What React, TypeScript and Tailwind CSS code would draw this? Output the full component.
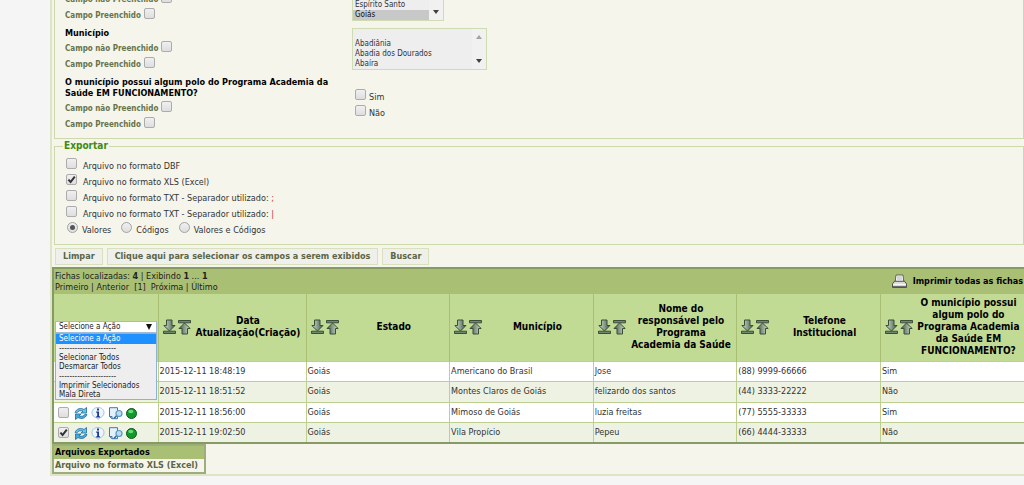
import type { InputHTMLAttributes, ReactNode } from 'react'
import { clsx } from 'clsx'

type Ficha = {
  data: string
  estado: string
  municipio: string
  responsavel: string
  telefone: string
  polo: string
  checked?: boolean
}

const fichas: Ficha[] = [
  {
    data: '2015-12-11 18:48:19',
    estado: 'Goiás',
    municipio: 'Americano do Brasil',
    responsavel: 'Jose',
    telefone: '(88) 9999-66666',
    polo: 'Sim',
  },
  {
    data: '2015-12-11 18:51:52',
    estado: 'Goiás',
    municipio: 'Montes Claros de Goiás',
    responsavel: 'felizardo dos santos',
    telefone: '(44) 3333-22222',
    polo: 'Não',
  },
  {
    data: '2015-12-11 18:56:00',
    estado: 'Goiás',
    municipio: 'Mimoso de Goiás',
    responsavel: 'luzia freitas',
    telefone: '(77) 5555-33333',
    polo: 'Sim',
  },
  {
    data: '2015-12-11 19:02:50',
    estado: 'Goiás',
    municipio: 'Vila Propício',
    responsavel: 'Pepeu',
    telefone: '(66) 4444-33333',
    polo: 'Não',
    checked: true,
  },
]

const columns = [
  'Data Atualização(Criação)',
  'Estado',
  'Município',
  'Nome do responsável pelo Programa Academia\u00a0da\u00a0Saúde',
  'Telefone Institucional',
  'O município possui algum polo do Programa Academia da Saúde EM FUNCIONAMENTO?',
]

const acoes = [
  'Selecione a Ação',
  '----------------------',
  'Selecionar Todos',
  'Desmarcar Todos',
  '----------------------',
  'Imprimir Selecionados',
  'Mala Direta',
]

function Checkbox(props: InputHTMLAttributes<HTMLInputElement>) {
  return (
    <span className="grid size-[11px] shrink-0">
      <input
        type="checkbox"
        className="peer col-start-1 row-start-1 size-[11px] appearance-none rounded-[2px] border border-[#acacac] bg-linear-to-b from-[#f0f0f0] to-[#dedede]"
        {...props}
      />
      <svg
        viewBox="0 0 11 11"
        className="pointer-events-none invisible col-start-1 row-start-1 size-[11px] peer-checked:visible"
      >
        <path d="M2.4 5.6 4.6 8 8.8 2.6" fill="none" stroke="#333" strokeWidth="2" />
      </svg>
    </span>
  )
}

function Radio(props: InputHTMLAttributes<HTMLInputElement>) {
  return (
    <span className="grid size-[11px] shrink-0 place-items-center">
      <input
        type="radio"
        name="conteudo"
        className="peer col-start-1 row-start-1 size-[11px] appearance-none rounded-full border border-[#a2a2a2] bg-linear-to-b from-[#f0f0f0] to-[#dedede]"
        {...props}
      />
      <span className="pointer-events-none invisible col-start-1 row-start-1 size-[5px] rounded-full bg-[#555] peer-checked:visible" />
    </span>
  )
}

function PreenchidoFilters() {
  return (
    <>
      {['Campo não Preenchido', 'Campo Preenchido'].map((text) => (
        <label
          key={text}
          className="flex h-4 items-start gap-[3px] text-[8px] leading-4 font-bold text-[#66734b]"
        >
          {text}
          <Checkbox />
        </label>
      ))}
    </>
  )
}

function FilterRow({ title, children }: { title?: string; children: ReactNode }) {
  return (
    <div className="grid grid-cols-[287px_1fr]">
      <div>
        {title && (
          <h3 className="pb-0.5 text-[9px] leading-[11px] font-bold text-black">{title}</h3>
        )}
        <PreenchidoFilters />
      </div>
      <div>{children}</div>
    </div>
  )
}

function ListArrow({ up }: { up?: boolean }) {
  return (
    <svg viewBox="0 0 6 4" className="h-1 w-1.5">
      <path d={up ? 'M0 4 3 0 6 4z' : 'M0 0 3 4 6 0z'} fill={up ? '#a3a3a3' : '#404040'} />
    </svg>
  )
}

function ListBox({
  label,
  options,
  value,
  className,
}: {
  label: string
  options: string[]
  value?: string
  className: string
}) {
  return (
    <div className={clsx('flex border border-[#cfdbb0] bg-[#eee]', className)}>
      <select
        aria-label={label}
        size={4}
        defaultValue={value}
        className="h-10 min-w-0 flex-1 appearance-none overflow-hidden text-[8px] text-[#333] outline-none"
      >
        {options.map((option) => (
          <option
            key={option}
            value={option}
            className="h-2.5 min-h-0 p-0 pl-0.5 text-[8px] leading-[10px] checked:bg-[#c8c8c8]"
          >
            {option}
          </option>
        ))}
      </select>
      <div className="flex w-3.5 flex-col items-center justify-between bg-[#f1f1f1] py-1.5">
        <ListArrow up />
        <ListArrow />
      </div>
    </div>
  )
}

function SortArrow({ up }: { up?: boolean }) {
  return (
    <svg viewBox="0 0 13 16" className={clsx('h-4 w-[13px]', up && 'rotate-180')}>
      <defs>
        <linearGradient id="sort" x1="0" x2="1">
          <stop offset="0" stopColor="#d3dfcb" />
          <stop offset="1" stopColor="#3f5c4c" />
        </linearGradient>
      </defs>
      <path
        d="M3.500 1h5.500v5.500h3L6.500 12 .8 6.500h2.700z"
        fill="url(#sort)"
        stroke="#3b4d3a"
        strokeWidth="1"
      />
      <path d="M.5 12.200h12v2.300H.5z" fill="#6c8a72" stroke="#3b4d3a" strokeWidth="1" />
    </svg>
  )
}

function RefreshIcon() {
  return (
    <svg viewBox="0 0 14 13" className="h-[13px] w-3.5">
      <path
        d="M1 5.500C2.500 1.500 7 .5 10 2.500L12.500.5V6H7l2-1.800C6.500 3.200 4 3.700 2.800 6z"
        fill="#6cc3ea"
        stroke="#1d6a9a"
        strokeWidth=".8"
      />
      <path
        d="M13 7.500C11.500 11.500 7 12.500 4 10.500L1.500 12.500V7H7L5 8.800c2.500 1 5 .5 6.200-1.800z"
        fill="#4aa9db"
        stroke="#1d6a9a"
        strokeWidth=".8"
      />
    </svg>
  )
}

function InfoIcon() {
  return (
    <svg viewBox="0 0 14 13" className="h-[13px] w-3.5">
      <path
        d="M7 .5c3.600 0 6 2.200 6 5.200 0 2.500-1.800 4.300-4 5L7 12.500l-1.500-1.800C2.800 10.200 1 8.300 1 5.700 1 2.700 3.400.5 7 .5z"
        fill="#eef7fd"
        stroke="#9cc3de"
      />
      <path d="M6 1.500h2v2H6zM5.200 4.500H8v4.800h1v1.200H5.200V9.300h1V5.700h-1z" fill="#1a36a0" />
    </svg>
  )
}

function PageIcon() {
  return (
    <svg viewBox="0 0 15 13" className="h-[13px] w-[15px]">
      <path d="M1.500.7h8v11H4L1.500 9.500z" fill="#e4f1fb" stroke="#3f7ba8" />
      <path d="M1.500 9.500H4v2.200" fill="none" stroke="#3f7ba8" />
      <path d="M8.800 8.500 6 11.500" stroke="#3a6f98" strokeWidth="1.600" />
      <circle cx="11" cy="6.500" r="3" fill="#b9dcf3" stroke="#5d97c0" strokeWidth="1.200" />
    </svg>
  )
}

function StatusIcon() {
  return (
    <svg viewBox="0 0 11 11" className="size-[11px]">
      <circle cx="5.500" cy="5.500" r="5" fill="#119a2b" stroke="#0a5c18" />
      <ellipse cx="4.800" cy="3.500" rx="2.600" ry="1.700" fill="#69d878" />
    </svg>
  )
}

function PrinterIcon() {
  return (
    <svg viewBox="0 0 15 15" className="size-[15px]">
      <path d="M4 1h7l.8 6.500H3.200z" fill="#fff" stroke="#555" strokeWidth=".9" />
      <path d="M5 3h5M4.800 5h5.500" stroke="#999" strokeWidth=".8" />
      <path
        d="M2.500 7.200h10L14.500 10v3.500H.5V10z"
        fill="#d8d8d8"
        stroke="#444"
        strokeWidth=".9"
      />
      <path d="M1 10.300h13" stroke="#fff" />
      <path d="M1 12.200h13v1.500H1z" fill="#555" />
    </svg>
  )
}

function Button({ children }: { children: ReactNode }) {
  return (
    <button
      type="button"
      className="h-[17px] border border-[#d8e0bd] bg-[#efefeb] px-[7px] text-[9px] leading-[15px] font-bold text-[#5a6644]"
    >
      {children}
    </button>
  )
}

function ActionSelect() {
  return (
    <div className="relative z-10 mx-px">
      <div className="flex h-3 items-center border border-[#9fbbd8] bg-white pr-1">
        <select
          aria-label="Ação"
          className="h-2.5 min-w-0 flex-1 appearance-none pl-[3px] text-[8px] leading-[10px] font-normal text-[#222] outline-none"
        >
          {acoes.map((acao, index) => (
            <option key={index}>{acao}</option>
          ))}
        </select>
        <svg viewBox="0 0 6 6" className="size-1.5">
          <path d="M0 0h6L3 6z" fill="#111" />
        </svg>
      </div>
      <ul className="absolute inset-x-0 top-full flex h-[67px] flex-col border border-[#8fb1d6] bg-[#eee] text-left text-[8px] font-normal text-[#222]">
        {acoes.map((acao, index) => (
          <li
            key={index}
            className={clsx(
              'flex flex-1 items-center pl-[3px] leading-[9px]',
              index === 0 && 'bg-[#1e90ff] text-white'
            )}
          >
            {acao}
          </li>
        ))}
      </ul>
    </div>
  )
}

function FichasTable() {
  return (
    <table className="w-full table-fixed border-collapse border-y-2 border-l-2 border-[#869a63] text-[9px] text-[#333]">
      <colgroup>
        <col className="w-[105px]" />
        <col className="w-[148px]" />
        <col />
        <col />
        <col />
        <col />
        <col />
      </colgroup>
      <thead>
        <tr className="bg-[#a9bf74]">
          <td colSpan={7} className="h-[26px] p-0">
            <div className="flex items-center justify-between px-px">
              <div className="leading-[11px] text-[#222]">
                <p>
                  Fichas localizadas: <b>4</b> | Exibindo <b>1</b> ... <b>1</b>
                </p>
                <p className="whitespace-pre">
                  <a href="#primeiro">Primeiro</a> | <a href="#anterior">Anterior</a>
                  {'  [1]  '}
                  <a href="#proxima">Próxima</a> | <a href="#ultimo">Último</a>
                </p>
              </div>
              <a
                href="#imprimir"
                className="flex items-center gap-1.5 text-[9px] font-bold text-black"
              >
                <PrinterIcon />
                Imprimir todas as fichas
              </a>
            </div>
          </td>
        </tr>
        <tr className="bg-[#c2db94]">
          <th className="h-[67px] border-r border-[#a9bf74] p-0">
            <ActionSelect />
          </th>
          {columns.map((column) => (
            <th key={column} className="border-l border-[#a9bf74] p-0 text-black">
              <div className="flex items-center pl-1">
                <button
                  type="button"
                  aria-label="Ordenar decrescente"
                  className="mr-0.5 shrink-0"
                >
                  <SortArrow />
                </button>
                <button type="button" aria-label="Ordenar crescente" className="shrink-0">
                  <SortArrow up />
                </button>
                <span className="flex-1 px-1 text-[10px] leading-3">{column}</span>
              </div>
            </th>
          ))}
        </tr>
      </thead>
      <tbody>
        {fichas.map((ficha) => (
          <tr
            key={ficha.data}
            className="h-5 bg-white even:h-[21px] even:bg-[#eef2e2] *:border-y *:border-l *:border-[#bdd08f] *:p-0 *:pt-px *:pl-px"
          >
            <td>
              <div className="flex items-center pl-[3px]">
                <Checkbox aria-label={`Selecionar ${ficha.data}`} defaultChecked={ficha.checked} />
                <div className="flex items-center gap-[3px] pt-0.5 pl-[5px]">
                  <RefreshIcon />
                  <InfoIcon />
                  <PageIcon />
                  <StatusIcon />
                </div>
              </div>
            </td>
            <td>{ficha.data}</td>
            <td>{ficha.estado}</td>
            <td>{ficha.municipio}</td>
            <td>{ficha.responsavel}</td>
            <td>{ficha.telefone}</td>
            <td>{ficha.polo}</td>
          </tr>
        ))}
      </tbody>
    </table>
  )
}

export default function App() {
  return (
    <div className="min-h-screen overflow-hidden bg-[#f5f5f5] pl-[50px] font-['DejaVu_Sans_Condensed','DejaVu_Sans',sans-serif] text-[9px] text-[#333]">
      <main className="border-b-2 border-l-2 border-[#dde5c6] bg-[#f5f5ec]">
        <section className="ml-0.5 flex flex-col gap-1 border-x border-b border-[#ccd9ab] pb-[5px] pl-2.5">
          <div className="-mt-2">
            <FilterRow>
              <div className="-mt-[13px]">
                <ListBox
                  label="Estado"
                  options={['Ceará', 'Distrito Federal', 'Espírito Santo', 'Goiás']}
                  value="Goiás"
                  className="w-[92px]"
                />
              </div>
            </FilterRow>
          </div>
          <FilterRow title="Município">
            <ListBox
              label="Município"
              options={['', 'Abadiânia', 'Abadia dos Dourados', 'Abaíra']}
              className="w-[135px]"
            />
          </FilterRow>
          <FilterRow title="O município possui algum polo do Programa Academia da Saúde EM FUNCIONAMENTO?">
            <div className="pt-3 pl-[3px]">
              {['Sim', 'Não'].map((text) => (
                <label key={text} className="flex h-4 items-start gap-[3px] leading-4">
                  <Checkbox />
                  {text}
                </label>
              ))}
            </div>
          </FilterRow>
        </section>

        <fieldset className="mt-px ml-0.5 border border-[#ccd9ab] pb-1.5 pl-[11px]">
          <legend className="-ml-[3px] px-px text-[10px] leading-3 font-bold text-[#3f8c12]">
            Exportar
          </legend>
          <div className="pt-1.5">
            <label className="flex h-4 items-start gap-1.5 leading-4">
              <Checkbox />
              Arquivo no formato DBF
            </label>
            <label className="flex h-4 items-start gap-1.5 leading-4">
              <Checkbox defaultChecked />
              Arquivo no formato XLS (Excel)
            </label>
            {[';', '|'].map((separador) => (
              <label key={separador} className="flex h-4 items-start gap-1.5 leading-4">
                <Checkbox />
                <span>
                  Arquivo no formato TXT - Separador utilizado:{' '}
                  <span className="text-[#c33]">{separador}</span>
                </span>
              </label>
            ))}
          </div>
          <div className="flex gap-2.5 pl-px">
            {['Valores', 'Códigos', 'Valores e Códigos'].map((text, index) => (
              <label key={text} className="flex h-4 items-start gap-1 leading-4">
                <Radio defaultChecked={index === 0} />
                {text}
              </label>
            ))}
          </div>
        </fieldset>

        <div className="flex gap-1 pt-[3px] pb-0.5 pl-[3px]">
          <Button>Limpar</Button>
          <Button>Clique aqui para selecionar os campos a serem exibidos</Button>
          <Button>Buscar</Button>
        </div>

        <FichasTable />

        <table className="border-collapse border-2 border-[#9dae7c] text-[9px] leading-[13px] font-bold">
          <thead>
            <tr>
              <th className="bg-[#a9bf74] p-0 pl-px text-left text-black">Arquivos Exportados</th>
            </tr>
          </thead>
          <tbody>
            <tr>
              <td className="p-0 pr-1.5 pl-px">
                <a href="#xls" className="text-[#5a6644]">
                  Arquivo no formato XLS (Excel)
                </a>
              </td>
            </tr>
          </tbody>
        </table>
      </main>
    </div>
  )
}
